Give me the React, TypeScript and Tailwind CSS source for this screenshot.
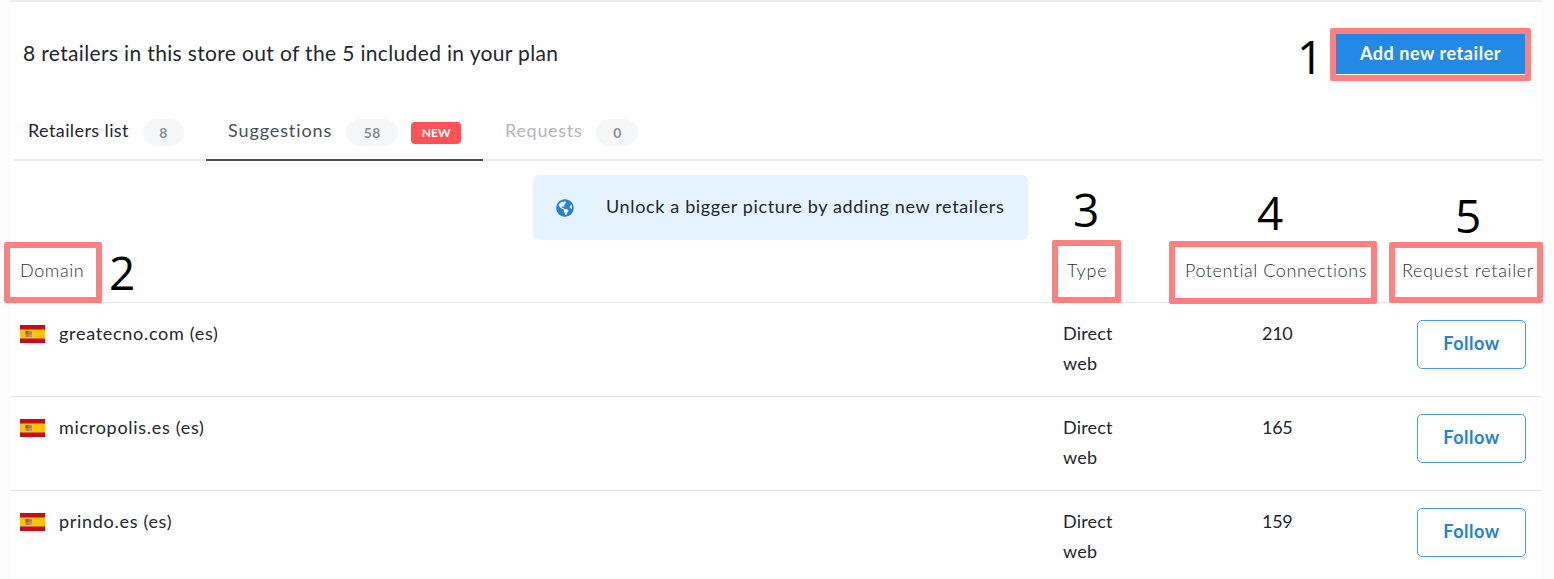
import { FaGlobeAmericas } from "react-icons/fa";

const font = { fontFamily: '"Lato", "Liberation Sans", sans-serif' };

function Flag() {
  return (
    <svg width="25" height="18" viewBox="0 0 25 18" className="shrink-0 mt-[7px]">
      <rect width="25" height="18" fill="#c60b1e" />
      <rect y="4.5" width="25" height="9" fill="#ffc400" />
      <rect x="5.5" y="6" width="6.5" height="6" rx="1" fill="#ad8a3a" />
      <rect x="5.5" y="6" width="3" height="3" fill="#b5493a" />
      <rect x="8.5" y="9" width="3.5" height="3" fill="#a89c8c" />
    </svg>
  );
}

function Badge({ children, w }: { children: React.ReactNode; w: string }) {
  return (
    <span className={`${w} h-[27px] rounded-full bg-[#f5f6f8] text-[#8a8f96] text-[14px] font-bold tracking-[0.3px] flex items-center justify-center`}>
      {children}
    </span>
  );
}

function Row({ domain, n }: { domain: string; n: number }) {
  return (
    <div className="flex h-[94px] border-b border-[#e3e5e9] text-[#23262e] text-[18px] leading-[30px]">
      <div className="w-[1053px] pl-[10px] pt-[15px] flex gap-[14px] items-start tracking-[0.7px]">
        <Flag />
        <span>{domain}</span>
      </div>
      <div className="w-[140px] pt-[15px] tracking-[0.2px]">
        Direct<br />web
      </div>
      <div className="w-[214px] pt-[15px] pl-[59px] tracking-[-0.3px]">{n}</div>
      <div className="pt-[17px]">
        <button className="w-[109px] h-[49px] rounded-[5px] border border-[#4a9be3] text-[#2a80d2] font-bold text-[18px] tracking-[0.5px] bg-white pb-[4px]">
          Follow
        </button>
      </div>
    </div>
  );
}

function Box({ cls }: { cls: string }) {
  return <div className={`absolute border-[6px] border-[#ff8080] rounded-[2px] ${cls}`} />;
}

function Num({ cls, children }: { cls: string; children: React.ReactNode }) {
  return (
    <div className={`absolute text-black text-[46px] leading-[48px] ${cls}`} style={{ fontFamily: '"Open Sans", sans-serif' }}>
      {children}
    </div>
  );
}

export default function App() {
  return (
    <div className="relative w-[1554px] h-[579px] overflow-hidden bg-[#fdfdfd]" style={font}>
      <div className="ml-[10px] w-[1532px] border-t-2 border-[#eceef1] bg-white">
        <div className="h-[104px] flex items-center justify-between pl-[13px] pr-[17px] pb-[2px]">
          <span className="text-[21px] text-[#23262e] tracking-[0.35px]">8 retailers in this store out of the 5 included in your plan</span>
          <button className="w-[189px] h-[42px] bg-[#228ae6] text-white font-bold text-[18px] tracking-[0.55px]">Add new retailer</button>
        </div>
        <div className="ml-[4px] h-[55px] border-b-2 border-[#e9ebef] flex text-[18px]">
          <div className="w-[192px] pl-[14px] flex items-start pt-[13px] gap-[14px] text-[#23262e]">
            <span className="leading-[23px] tracking-[0.4px]">Retailers list</span>
            <Badge w="w-[41px]">8</Badge>
          </div>
          <div className="w-[277px] h-[55px] border-b-2 border-[#4a4e5a] pl-[22px] flex items-start pt-[13px] gap-[14px] text-[#4a4e5a]">
            <span className="leading-[23px] tracking-[0.9px]">Suggestions</span>
            <Badge w="w-[52px]">58</Badge>
            <span className="w-[50px] h-[22px] mt-[3px] -ml-px rounded-[4px] bg-[#ff5257] text-white text-[12px] font-bold flex items-center justify-center">NEW</span>
          </div>
          <div className="pl-[22px] flex items-start pt-[13px] gap-[14px] text-[#b3b6bb]">
            <span className="leading-[23px] tracking-[0.7px]">Requests</span>
            <Badge w="w-[42px]">0</Badge>
          </div>
        </div>
        <div className="flex justify-end pt-[14px] pr-[514px]">
          <div className="w-[495px] h-[65px] bg-[#e4f3fd] rounded-[6px] flex items-center pl-[23px] gap-[32px] text-[18px] text-[#23262e] tracking-[0.64px]">
            <FaGlobeAmericas className="text-[#2a7fd1] text-[18px]" />
            <span className="pb-[2px]">Unlock a bigger picture by adding new retailers</span>
          </div>
        </div>
        <div className="h-[63px] flex items-center border-b border-[#e3e5e9] text-[18px] text-[#2a303c] font-light pb-[2px]">
          <div className="w-[1057px] pl-[10px] tracking-[0.6px]">Domain</div>
          <div className="w-[118px] tracking-[0.8px]">Type</div>
          <div className="w-[217px] tracking-[0.55px]">Potential Connections</div>
          <div className="tracking-[0.65px]">Request retailer</div>
        </div>
        <Row domain="greatecno.com (es)" n={210} />
        <Row domain="micropolis.es (es)" n={165} />
        <Row domain="prindo.es (es)" n={159} />
      </div>

      <Box cls="left-[1330px] top-[28px] w-[201px] h-[53px]" />
      <Box cls="left-[4px] top-[242px] w-[98px] h-[61px]" />
      <Box cls="left-[1052px] top-[240px] w-[69px] h-[63px]" />
      <Box cls="left-[1169px] top-[241px] w-[208px] h-[63px]" />
      <Box cls="left-[1389px] top-[242px] w-[154px] h-[61px]" />
      <Num cls="left-[1297px] top-[32px]">1</Num>
      <Num cls="left-[109px] top-[248px]">2</Num>
      <Num cls="left-[1073px] top-[185px]">3</Num>
      <Num cls="left-[1257px] top-[188px]">4</Num>
      <Num cls="left-[1455px] top-[191px]">5</Num>
    </div>
  );
}
